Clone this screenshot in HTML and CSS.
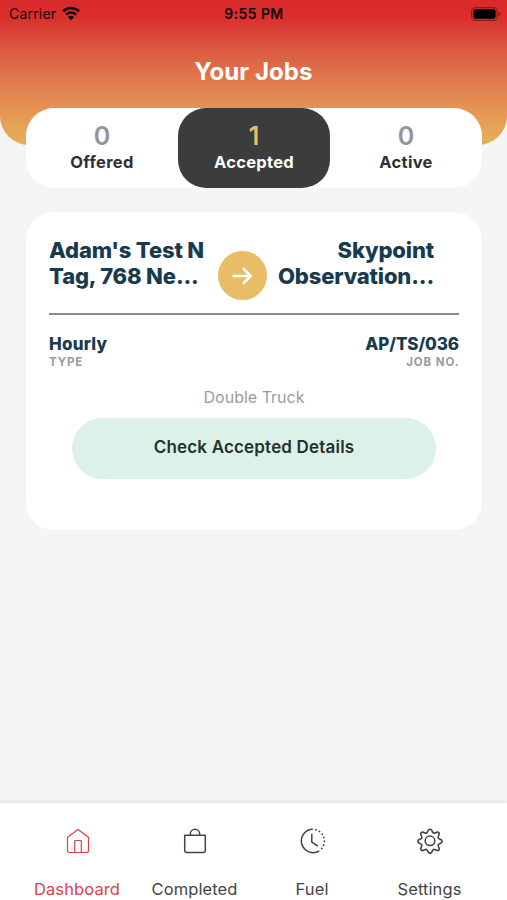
FILE: index.html
```html
<!DOCTYPE html>
<html lang="en">
<head>
  <meta charset="UTF-8">
  <meta name="viewport" content="width=device-width, initial-scale=1.0">
  <title>Your Jobs</title>
  <link rel="stylesheet" href="styles.css">
</head>
<body>
  <div class="screen">
    <header class="header">
      <div class="status-bar">
        <div class="carrier">
          <span>Carrier</span>
          <svg width="20" height="15" viewBox="0 0 20 15">
            <path d="M2 5.2a11.6 11.6 0 0 1 16 0" fill="none" stroke="#140606" stroke-width="2.6"/>
            <path d="M5 8.6a7.2 7.2 0 0 1 10 0" fill="none" stroke="#140606" stroke-width="2.5"/>
            <path d="M10 14.2 6.9 11.1a4.4 4.4 0 0 1 6.2 0z" fill="#140606"/>
          </svg>
        </div>
        <span class="time">9:55 PM</span>
        <svg class="battery" width="30" height="14" viewBox="0 0 30 14">
          <rect x=".6" y=".6" width="25.6" height="12.8" rx="3.8" fill="none" stroke="#000" stroke-opacity=".38" stroke-width="1.1"/>
          <rect x="2.2" y="2.2" width="22.4" height="9.6" rx="2.4" fill="#000"/>
          <path d="M27.6 4.8v4.4c1-.3 1.7-1.2 1.7-2.2s-.7-1.9-1.7-2.2z" fill="#000" fill-opacity=".4"/>
        </svg>
      </div>
      <h1>Your Jobs</h1>
    </header>

    <nav class="tabs">
      <a class="tab">
        <span class="count">0</span>
        <span class="tab-label">Offered</span>
      </a>
      <a class="tab selected">
        <span class="count">1</span>
        <span class="tab-label">Accepted</span>
      </a>
      <a class="tab">
        <span class="count">0</span>
        <span class="tab-label">Active</span>
      </a>
    </nav>

    <main class="card">
      <div class="route">
        <div class="place">Adam's Test N<br>Tag, 768 Ne...</div>
        <div class="arrow">
          <svg width="22" height="20" viewBox="0 0 22 20" fill="none" stroke="#fff" stroke-width="2.6" stroke-linecap="round" stroke-linejoin="round">
            <path d="M2.500 10h17M12.800 3 19.700 10l-6.900 7"/>
          </svg>
        </div>
        <div class="place to">Skypoint<br>Observation...</div>
      </div>
      <div class="details">
        <div class="detail">
          <div class="value">Hourly</div>
          <div class="caption">TYPE</div>
        </div>
        <div class="detail right">
          <div class="value">AP/TS/036</div>
          <div class="caption">JOB NO.</div>
        </div>
      </div>
      <div class="truck">Double Truck</div>
      <button class="btn">Check Accepted Details</button>
    </main>

    <footer class="bottom-nav">
      <a class="nav-item active">
        <svg width="26" height="26" viewBox="0 0 26 26" fill="none" stroke="currentColor" stroke-width="1.2" stroke-linejoin="round">
          <path d="M2.500 9.200 13 1.600l10.500 7.600v13.300a2 2 0 0 1-2 2h-17a2 2 0 0 1-2-2z"/>
          <path d="M9.700 24.500V13.200a.7.7 0 0 1 .7-.7h5.200a.7.7 0 0 1 .7.7v11.300"/>
        </svg>
        <span>Dashboard</span>
      </a>
      <a class="nav-item">
        <svg width="26" height="26" viewBox="0 0 26 26" fill="none" stroke="currentColor" stroke-width="1.5" stroke-linejoin="round">
          <path d="M2.700 7.300h20.600v15.200a2 2 0 0 1-2 2H4.700a2 2 0 0 1-2-2z"/>
          <path d="M8.300 7.300V6a4.700 4.700 0 0 1 9.400 0v1.300"/>
        </svg>
        <span>Completed</span>
      </a>
      <a class="nav-item">
        <svg width="26" height="26" viewBox="0 0 26 26" fill="none" stroke="currentColor" stroke-width="1.5">
          <path d="M12.800 1.200a11.700 11.700 0 1 0 6.500 21.600"/>
          <path d="M15.100 1.600a11.700 11.700 0 0 1 6.200 19.400" stroke-dasharray="1.8 2"/>
          <path d="M11.800 5.800v8.300l6 3.900"/>
        </svg>
        <span>Fuel</span>
      </a>
      <a class="nav-item">
        <svg width="26" height="26" viewBox="0 0 26 26" fill="none" stroke="currentColor" stroke-width="1.5" stroke-linejoin="round">
          <circle cx="13" cy="12.800" r="4.800"/>
          <path transform="translate(-1.040 -.200) scale(1.080)" d="M11.500 2.200q1.500-1.600 3 0l1.100 2.100q.7 1 1.900.5l2.200-.8q2-.2 1.800 1.800l-.8 2.200q-.5 1.200.5 1.900l2.100 1.100q1.800 1.500 0 3l-2.100 1.100q-1 .7-.5 1.900l.8 2.200q.2 2-1.800 1.800l-2.200-.8q-1.200-.5-1.900.5l-1.100 2.100q-1.500 1.600-3 0l-1.100-2.100q-.7-1-1.900-.5l-2.200.8q-2 .2-1.800-1.800l.8-2.200q.5-1.200-.5-1.900l-2.100-1.100q-1.800-1.500 0-3l2.100-1.100q1-.7.5-1.900l-.8-2.200q-.2-2 1.800-1.800l2.200.8q1.200.5 1.900-.5z"/>
        </svg>
        <span>Settings</span>
      </a>
    </footer>
  </div>
</body>
</html>
```

FILE: styles.css
```css
* {
  box-sizing: border-box;
}
body {
  margin: 0;
  background: #f5f5f5;
  font-family: Inter, "Liberation Sans", sans-serif;
  color: #2f3033;
}
.screen {
  height: 900px;
  display: flex;
  flex-direction: column;
  overflow: hidden;
}
.header {
  height: 145px;
  flex: none;
  border-radius: 0 0 29px 29px;
  background: linear-gradient(#d9292b 0, #d9302c 18px, #da5b41 50px, #e08350 90px, #e69653 112px, #e5b159 145px);
}
.status-bar {
  display: grid;
  grid-template-columns: 1fr auto 1fr;
  align-items: center;
  height: 27px;
  padding: 0 6px 0 9px;
  font-size: 14px;
  color: #140606;
}
.carrier {
  display: flex;
  align-items: center;
  gap: 5px;
  letter-spacing: 0.2px;
}
.time {
  margin-right: 2px;
  font-weight: 600;
  letter-spacing: 0.4px;
}
.battery {
  justify-self: end;
}
h1 {
  margin: 30px 0 0;
  font-size: 24px;
  line-height: 30px;
  font-weight: 700;
  letter-spacing: 0.1px;
  text-align: center;
  color: #fff;
}
.tabs {
  display: flex;
  flex: none;
  height: 80px;
  margin: -37px 25px 0 26px;
  border-radius: 28px;
  background: #fff;
}
.tab {
  flex: 1;
  display: flex;
  flex-direction: column;
  align-items: center;
  padding-top: 13px;
  border-radius: 28px;
}
.count {
  font-size: 25px;
  line-height: 30px;
  font-weight: 600;
  color: #949494;
}
.tab-label {
  font-size: 16.5px;
  line-height: 22px;
  font-weight: 700;
  letter-spacing: 0.3px;
}
.selected {
  background: #3c3c3c;
  color: #fff;
}
.selected .count {
  color: #e9bd64;
}
.card {
  flex: none;
  height: 318px;
  margin: 24px 25px 0 26px;
  padding: 25px 23px 0;
  border-radius: 28px;
  background: #fff;
}
.route {
  display: flex;
  height: 78px;
  padding-right: 25px;
  border-bottom: 2px solid #8a8a8a;
}
.place {
  flex: 1;
  font-size: 22px;
  line-height: 26px;
  font-weight: 800;
  letter-spacing: -0.15px;
  color: #173b4d;
  white-space: nowrap;
}
.to {
  text-align: right;
}
.arrow {
  display: flex;
  align-items: center;
  justify-content: center;
  flex: none;
  width: 49px;
  height: 49px;
  margin: 14px 0 0 1px;
  border-radius: 50%;
  background: #e8bd66;
}
.details {
  display: flex;
  justify-content: space-between;
  padding-top: 19px;
}
.right {
  text-align: right;
}
.value {
  font-size: 17px;
  line-height: 20px;
  font-weight: 800;
  letter-spacing: 0.2px;
  color: #173b4d;
}
.right .value {
  letter-spacing: -0.1px;
}
.caption {
  font-size: 11.5px;
  line-height: 17px;
  font-weight: 700;
  letter-spacing: 0.9px;
  color: #969c9f;
}
.right .caption {
  margin-right: -0.4px;
}
.truck {
  margin-top: 16px;
  font-size: 16px;
  line-height: 20px;
  text-align: center;
  color: #979da0;
}
.btn {
  display: block;
  width: 364px;
  height: 61px;
  margin: 11px 0 0 23px;
  padding: 0 0 4px;
  border: none;
  border-radius: 31px;
  background: #dcf1e7;
  font-family: inherit;
  font-size: 17px;
  font-weight: 600;
  letter-spacing: 0.18px;
  color: #26302d;
}
.bottom-nav {
  display: flex;
  flex: none;
  height: 97px;
  margin-top: auto;
  padding: 0 18px 0 19px;
  background: #fff;
  box-shadow: 0 -1px 4px rgba(0, 0, 0, 0.1);
}
.nav-item {
  flex: 1;
  display: flex;
  flex-direction: column;
  align-items: center;
  padding-top: 25px;
  font-size: 16.5px;
  line-height: 20px;
  color: #444;
}
.nav-item span {
  margin: 25px 1.5px 0 0;
  letter-spacing: 0.1px;
}
.active {
  color: #d94346;
}
```
